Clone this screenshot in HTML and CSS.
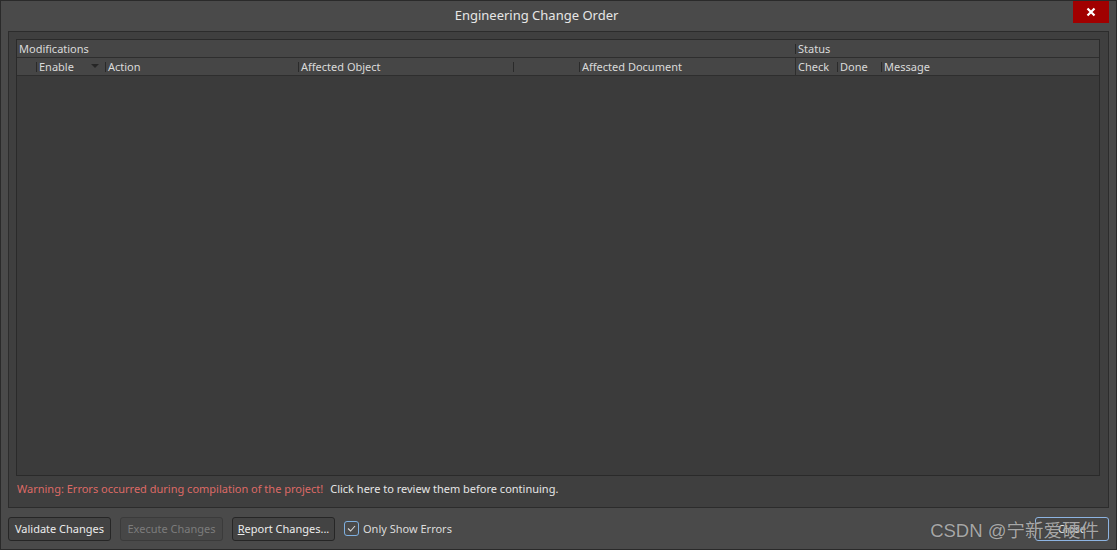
FILE: index.html
```html
<!DOCTYPE html>
<html lang="en">
<head>
    <meta charset="UTF-8">
    <title>Engineering Change Order</title>
    <link rel="stylesheet" href="styles.css">
</head>
<body>
    <div class="window">
        <div class="titlebar">
            <span class="title">Engineering Change Order</span>
            <div class="close-x">
                <svg width="10" height="10" viewBox="0 0 10 10">
                    <path d="M1.5 1.5 L8.5 8.5 M8.5 1.5 L1.5 8.5" stroke="#fff" stroke-width="2.2"/>
                </svg>
            </div>
        </div>

        <div class="panel">
            <div class="grid">
                <div class="head-row top">
                    <div class="cell c-mods">Modifications</div>
                    <div class="cell c-status sep">Status</div>
                </div>
                <div class="head-row">
                    <div class="cell c0"></div>
                    <div class="cell c-enable sep">Enable<span class="arrow"></span></div>
                    <div class="cell c-action sep">Action</div>
                    <div class="cell c-obj sep">Affected Object</div>
                    <div class="cell c-blank sep"></div>
                    <div class="cell c-doc sep">Affected Document</div>
                    <div class="cell c-check full">Check</div>
                    <div class="cell c-done sep">Done</div>
                    <div class="cell c-msg sep">Message</div>
                </div>
                <div class="grid-body"></div>
            </div>
            <div class="warning">
                <span class="warn-red">Warning: Errors occurred during compilation of the project!</span>
                <span class="warn-link">Click here to review them before continuing.</span>
            </div>
        </div>

        <div class="bottom">
            <button class="btn">Validate Changes</button>
            <button class="btn disabled">Execute Changes</button>
            <button class="btn"><u>R</u>eport Changes...</button>
            <label class="check">
                <span class="box">
                    <svg width="11" height="11" viewBox="0 0 11 11">
                        <path d="M2 5.5 L4.6 8 L9 3" fill="none" stroke="#d8d8d8" stroke-width="1.1"/>
                    </svg>
                </span>
                Only Show Errors
            </label>
            <div class="spacer"></div>
            <button class="btn close-btn">Close</button>
        </div>

        <div class="watermark">CSDN @宁新爱硬件</div>
    </div>
</body>
</html>
```

FILE: styles.css
```css
*{
    box-sizing: border-box;
}
body{
    margin: 0;
    background: #2b2b2b;
    font-family: "Noto Sans", "Open Sans", sans-serif;
    font-size: 11px;
    color: #dcdcdc;
}
.window{
    position: relative;
    width: 1117px;
    height: 550px;
    background: #4a4a4a;
    border: 1px solid #2a2a2a;
    display: flex;
    flex-direction: column;
}
.titlebar{
    height: 30px;
    display: flex;
    align-items: center;
    justify-content: center;
    padding-right: 44px;
    position: relative;
}
.title{
    font-size: 13px;
    color: #e6e6e6;
    margin-top: -3px;
}
.close-x{
    position: absolute;
    right: 7px;
    top: 0;
    width: 36px;
    height: 22px;
    background: #a10000;
    display: flex;
    align-items: center;
    justify-content: center;
}
.panel{
    margin: 0 7px;
    height: 477px;
    background: #3f3f3f;
    border: 1px solid #2c2c2c;
    padding: 7px 8px 0 7px;
    display: flex;
    flex-direction: column;
}
.grid{
    height: 437px;
    border: 1px solid #2a2a2a;
    display: flex;
    flex-direction: column;
}
.head-row{
    height: 18px;
    display: flex;
    background: #464646;
    border-bottom: 1px solid #2e2e2e;
}
.cell{
    position: relative;
    height: 100%;
    display: flex;
    align-items: center;
    padding-left: 3px;
    color: #dadada;
    white-space: nowrap;
}
.sep::before{
    content: "";
    position: absolute;
    left: 0;
    top: 4px;
    bottom: 3px;
    border-left: 1px solid #2a2a2a;
}
.full{
    border-left: 1px solid #2e2e2e;
}
.c-mods{ width: 778px; padding-left: 2px; }
.c-status{ flex: 1; }
.c0{ width: 19px; }
.c-enable{ width: 69px; }
.c-action{ width: 193px; }
.c-obj{ width: 215px; }
.c-blank{ width: 66px; }
.c-doc{ width: 216px; }
.c-check{ width: 42px; padding-left: 2px; }
.c-done{ width: 44px; }
.c-msg{ flex: 1; }
.arrow{
    position: absolute;
    left: 55px;
    top: 6px;
    border-left: 4px solid transparent;
    border-right: 4px solid transparent;
    border-top: 4px solid #262626;
}
.grid-body{
    flex: 1;
    background: #3b3b3b;
}
.warning{
    height: 31px;
    display: flex;
    align-items: center;
    gap: 7px;
    padding-left: 1px;
    padding-bottom: 6px;
}
.warn-red{
    color: #dd6a66;
}
.warn-link{
    color: #e6e6e6;
}
.bottom{
    flex: 1;
    display: flex;
    align-items: center;
    padding: 0 7px 0 7px;
    gap: 9px;
}
.btn{
    font-family: inherit;
    font-size: 11px;
    height: 24px;
    width: 103px;
    padding: 0;
    background: #434343;
    color: #ececec;
    border: 1px solid #262626;
    border-radius: 3px;
}
.btn.disabled{
    background: #474747;
    border-color: #3b3b3b;
    color: #7c7c7c;
}
.check{
    display: flex;
    align-items: center;
    gap: 4px;
    color: #dcdcdc;
}
.box{
    width: 15px;
    height: 15px;
    border: 1px solid #7fb0e0;
    border-radius: 3px;
    display: flex;
    align-items: center;
    justify-content: center;
}
.spacer{
    flex: 1;
}
.close-btn{
    width: 74px;
    border-color: #8db4e2;
    background: #474747;
}
.watermark{
    position: absolute;
    right: 17px;
    bottom: 7px;
    font-family: "Liberation Sans", "Noto Sans CJK SC", sans-serif;
    font-size: 18.5px;
    color: rgba(205, 205, 205, 0.75);
    text-shadow: 0 0 1px #333;
}
```
